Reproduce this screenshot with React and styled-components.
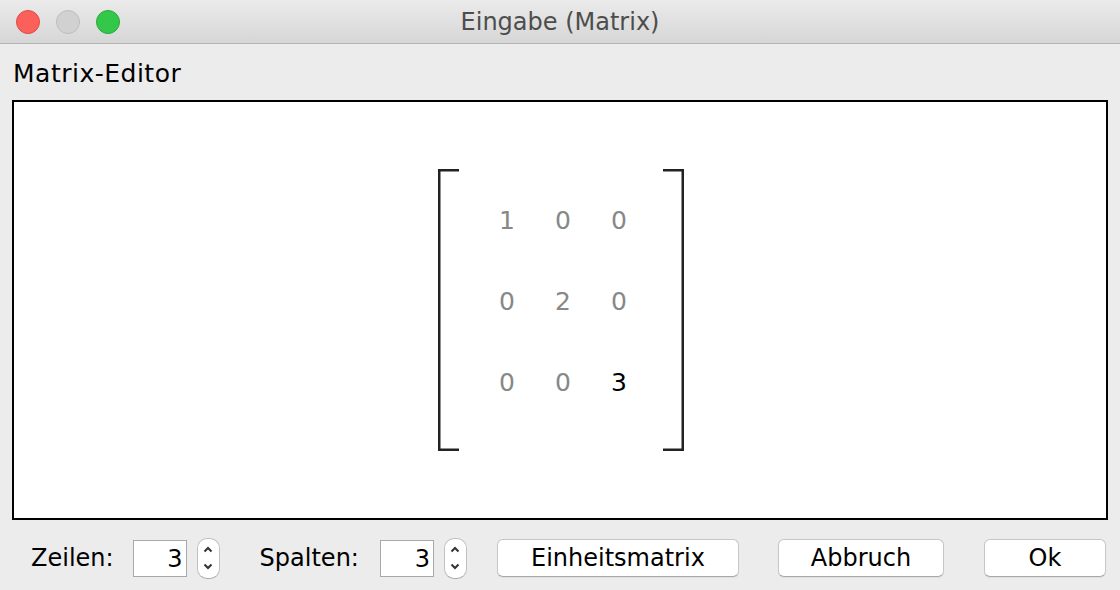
import React from "react";
import styled, { createGlobalStyle } from "styled-components";

const Global = createGlobalStyle`
  html, body {
    margin: 0;
    padding: 0;
    background: #ececec;
  }
  body {
    font-family: "DejaVu Sans", "Liberation Sans", sans-serif;
    color: #000;
  }
`;

const Window = styled.div`
  width: 1120px;
  height: 590px;
  display: flex;
  flex-direction: column;
  background: #ececec;
  overflow: hidden;
`;

const TitleBar = styled.div`
  height: 43px;
  flex: none;
  display: flex;
  align-items: center;
  position: relative;
  background: linear-gradient(#ebebeb, #d6d6d6);
  border-bottom: 1px solid #b4b4b4;
`;

const Lights = styled.div`
  display: flex;
  gap: 16px;
  padding-left: 16px;
  margin-top: 1px;
`;

const Light = styled.span`
  width: 24px;
  height: 24px;
  border-radius: 50%;
  box-sizing: border-box;
  background: ${p => p.$bg};
  border: 1px solid ${p => p.$edge};
`;

const Title = styled.div`
  position: absolute;
  left: 0;
  right: 0;
  top: 0;
  bottom: 0;
  display: flex;
  align-items: center;
  justify-content: center;
  font-size: 24px;
  color: #4d4d4d;
  pointer-events: none;
`;

const Body = styled.div`
  flex: none;
  display: flex;
  flex-direction: column;
  padding: 0 12px;
`;

const Caption = styled.div`
  font-size: 25px;
  letter-spacing: 0.5px;
  height: 56px;
  line-height: 60px;
  padding-left: 1px;
`;

const Panel = styled.div`
  height: 420px;
  box-sizing: border-box;
  border: 2px solid #000;
  background: #fff;
  display: flex;
  align-items: center;
  justify-content: center;
`;

const Matrix = styled.div`
  display: flex;
  align-items: stretch;
  height: 282px;
  margin-left: 2px;
`;

const Grid = styled.div`
  display: grid;
  grid-template-columns: repeat(3, 56px);
  grid-auto-rows: 81px;
  padding: 11px 15px 0 19px;
`;

const Cell = styled.div`
  display: flex;
  align-items: center;
  justify-content: center;
  font-size: 25px;
  color: ${p => (p.$active ? "#000" : "#888")};
`;

const Footer = styled.div`
  flex: 1;
  display: flex;
  align-items: center;
  padding: 6px 14px 0 31px;
`;

const Label = styled.span`
  font-size: 24px;
  margin-right: ${p => p.$after || 19}px;
  margin-left: ${p => p.$gap || 0}px;
`;

const Field = styled.div`
  width: 54px;
  height: 37px;
  box-sizing: border-box;
  background: #fff;
  border: 1px solid #a9a9a9;
  font-size: 24px;
  text-align: right;
  padding-right: 3px;
  line-height: 36px;
`;

const Spinner = styled.div`
  width: 23px;
  height: 41px;
  box-sizing: border-box;
  margin-left: 10px;
  background: #fff;
  border: 1px solid #c2c2c2;
  border-bottom-color: #a8a8a8;
  border-radius: 10px;
  display: flex;
  flex-direction: column;
  align-items: center;
  justify-content: center;
  gap: 10px;
`;

const Button = styled.div`
  height: 38px;
  box-sizing: border-box;
  width: ${p => p.$w}px;
  margin-left: ${p => p.$gap}px;
  background: #fff;
  border: 1px solid #c6c6c6;
  border-bottom-color: #a9a9a9;
  border-radius: 6px;
  box-shadow: 0 1px 1px rgba(0, 0, 0, 0.06);
  display: flex;
  align-items: center;
  justify-content: center;
  font-size: 24px;
`;

const Bracket = ({ side }) => {
  const d =
    side === "left"
      ? "M21 1.25 H1.25 V280.75 H21"
      : "M1 1.25 H20.75 V280.75 H1";
  return (
    <svg width="22" height="282" viewBox="0 0 22 282">
      <path d={d} fill="none" stroke="#222" strokeWidth="2.5" />
    </svg>
  );
};

const Chevron = ({ up }) => (
  <svg width="10" height="7" viewBox="0 0 10 7">
    <path
      d={up ? "M1.5 5.5 L5 2 L8.5 5.5" : "M1.5 1.5 L5 5 L8.5 1.5"}
      fill="none"
      stroke="#333"
      strokeWidth="2"
    />
  </svg>
);

const values = [
  [1, 0, 0],
  [0, 2, 0],
  [0, 0, 3],
];

export default function App() {
  return (
    <Window>
      <Global />
      <TitleBar>
        <Lights>
          <Light $bg="#fc605b" $edge="#de4b45" />
          <Light $bg="#d1d1d1" $edge="#bdbdbd" />
          <Light $bg="#34c84a" $edge="#2aa83c" />
        </Lights>
        <Title>Eingabe (Matrix)</Title>
      </TitleBar>
      <Body>
        <Caption>Matrix-Editor</Caption>
        <Panel>
          <Matrix>
            <Bracket side="left" />
            <Grid>
              {values.map((row, r) =>
                row.map((v, c) => (
                  <Cell key={`${r}-${c}`} $active={r === 2 && c === 2}>
                    {v}
                  </Cell>
                ))
              )}
            </Grid>
            <Bracket side="right" />
          </Matrix>
        </Panel>
      </Body>
      <Footer>
        <Label>Zeilen:</Label>
        <Field>3</Field>
        <Spinner>
          <Chevron up />
          <Chevron />
        </Spinner>
        <Label $gap={40} $after={21}>Spalten:</Label>
        <Field>3</Field>
        <Spinner>
          <Chevron up />
          <Chevron />
        </Spinner>
        <Button $w={242} $gap={30}>Einheitsmatrix</Button>
        <Button $w={166} $gap={39}>Abbruch</Button>
        <Button $w={122} $gap={40}>Ok</Button>
      </Footer>
    </Window>
  );
}
